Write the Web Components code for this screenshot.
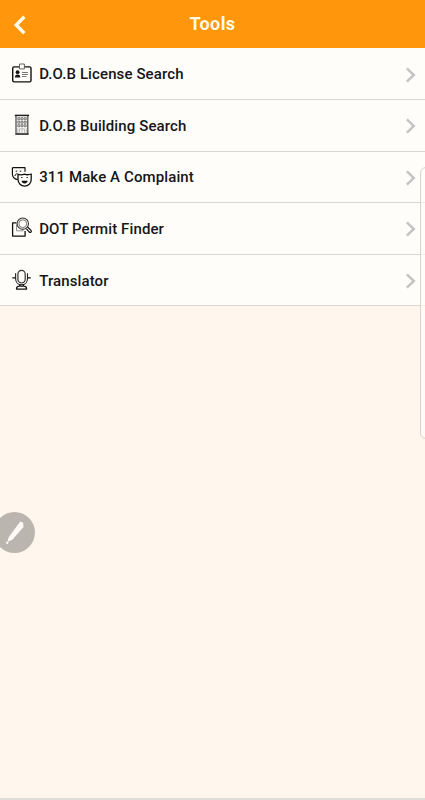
<!DOCTYPE html>
<html lang="en">
<head>
<meta charset="utf-8">
<title>Tools</title>
<style>
html,body{margin:0;height:100%;overflow:hidden}
body{font-family:Roboto,"Liberation Sans",sans-serif;background:#fff6ed}
</style>
</head>
<body>
<tools-screen></tools-screen>
<script>
const define = (name, markup) => customElements.define(name, class extends HTMLElement {
  constructor() {
    super();
    this.attachShadow({ mode: 'open' }).innerHTML = typeof markup === 'function' ? markup(this) : markup;
  }
});

const icons = {
  license: `<rect x="2.7" y="4.9" width="18.3" height="15" rx="1.4" stroke-width="1.4"/>
    <path d="M9.5 6.9V2h4.900v4.900z" fill="#fffdfa" stroke="#555" stroke-width=".9"/>
    <circle cx="7.6" cy="10.2" r="1.9" fill="#111" stroke="none"/><path d="M4.9 15.6c0-2.2 1-3.2 2.7-3.2s2.7 1 2.7 3.2z" fill="#111" stroke="none"/>
    <path d="M12 10.500h6M12 12.500h6M12 14.500h4.4" stroke="#777" stroke-width="1"/>`,
  building: `<path d="M6 3v17.3M17.8 3v17.3" stroke="#555" stroke-width="1.3"/>
    <path d="M4.8 2.4h14.3" stroke="#222" stroke-width="1.5"/><path d="M5.3 21h13.4" stroke-width="1.5"/>
    <path d="M7.8 4.7h2v2h-2zm3.2 0h2v2h-2zm3.2 0h2v2h-2zM7.8 8.2h2v2h-2zm3.2 0h2v2h-2zm3.2 0h2v2h-2zM7.8 11.7h2v2h-2zm3.2 0h2v2h-2zm3.2 0h2v2h-2z" stroke="#444" stroke-width=".7"/>
    <path d="M9.6 20.5v-4.7h4.8v4.7M12 16v4.5M7.8 15.3v4.8M16.2 15.3v4.8" stroke="#999" stroke-width=".7"/>`,
  masks: `<path d="M2.4 2.7H15v4M2.4 2.7v6.1c0 3 2.2 5.3 5.2 5.8" stroke-width="1.2"/>
    <path d="M5.7 6.2h1.5M9.7 6.2h1.5M5 11c.2-1.6 1-2.3 2.6-2.3" stroke-width="1"/>
    <path d="M8 9.4q3.4 1 6.6-.2 3.1 1.2 6.6-.2v5.4c0 4-3 6.7-6.6 6.7S8 18.300 8 14.500z" stroke-width="1.3"/>
    <path d="M11.2 12.500h1.300M16.500 12.500h1.300" stroke-width="1.2"/><path d="M11.500 15.700h6.200c-.4 1.800-1.500 2.700-3.100 2.700s-2.700-.9-3.100-2.700z" fill="#111" stroke="none"/>`,
  permit: `<path d="M6.500 6.800H2.600v13.300h12.500v-5" stroke-width="1.3"/><path d="M6.500 8.500v6.300h7" stroke="#777" stroke-width=".8"/>
    <path d="M16.300 12.700l3 3.400c1.300 1 2.700-.4 1.700-1.700L17.600 11" stroke-width="1.200"/>
    <circle cx="12.800" cy="7.700" r="5.700" fill="#fffdfa" stroke="#333" stroke-width="1.100"/><circle cx="12.800" cy="7.700" r="3.900" stroke="#555" stroke-width=".8"/>`,
  mic: `<rect x="7.900" y="2.300" width="7.300" height="12.700" rx="3.650" stroke="#333" stroke-width="1.200"/>
    <path d="M5.600 5.200v5.200c0 3.900 2.600 6.400 5.950 6.400s5.950-2.500 5.950-6.400V5.200" stroke="#222" stroke-width="1.100"/>
    <path d="M2.300 9.900h3.300M17.500 9.900h3.300" stroke-width="1.400"/><path d="M9.800 16.600v1.300M13.300 16.600v1.300M6.500 21.100c0-1.900 1-2.900 2.700-2.900h4.700c1.700 0 2.700 1 2.700 2.900z" stroke-width="1.300"/>`
};

define('tool-icon', el => `<style>:host{display:block;width:24px;height:24px}svg{display:block}</style>
<svg width="24" height="24" viewBox="0 0 24 24" fill="none" stroke="#111" stroke-linejoin="round">${icons[el.getAttribute('name')]}</svg>`);

define('app-header', `<style>
:host{display:grid;grid-template-columns:40px 1fr 40px;height:48.400px;background:#ff960c;color:#fffbe3;align-items:center}
svg{display:block;margin:2px 0 0 13px}
h1{margin:0;text-align:center;font-size:18px;line-height:22px;font-weight:700;letter-spacing:.38px}
</style><svg width="14" height="20" viewBox="0 0 14 20" fill="none" stroke="#fffbe8" stroke-width="3.400"><path d="M11.400 1.700 3.200 10l8.200 8.300"/></svg><h1><slot></slot></h1>`);

define('tool-row', el => `<style>
:host{display:flex;align-items:center;box-sizing:border-box;height:51.600px;padding:0 9px 0 10px;background:#fffdfa;border-bottom:1px solid #d9d7d5;color:#161616}
span{flex:1;margin:1.200px 0 0 5.200px;font-size:15px;line-height:20px;font-weight:500;letter-spacing:.11px;white-space:nowrap}
.chevron{margin-top:2px}
</style><tool-icon name="${el.getAttribute('icon')}"></tool-icon><span><slot></slot></span>
<svg class="chevron" width="11" height="16" viewBox="0 0 11 16" fill="none" stroke="#c5c4c4" stroke-width="2.500"><path d="m1.900 1.300 6.900 6.700-6.900 6.700"/></svg>`);

define('edge-panel', `<style>
:host{position:absolute;left:420px;top:167px;width:12px;height:272px;box-sizing:border-box;border:1px solid #d8d3cd;border-radius:7px;background:rgba(255,253,250,.6)}
</style>`);

define('pen-button', `<style>
:host{position:absolute;left:-6px;top:512px;width:41px;height:41px;border-radius:50%;background:#bbb5af}
svg{display:block}
</style><svg width="41" height="41" viewBox="0 0 41 41" fill="#fffaf5"><path d="M25.700 10.300c1.200-1.100 3.600 0 3.600 1.700v3.300L18.600 27.400l-3.800 2.200-1.200-1.100 1.300-3.500z"/><circle cx="13.200" cy="30.800" r="1.200"/></svg>`);

define('tools-screen', `<style>
:host{display:flex;flex-direction:column;position:relative;width:100%;height:100vh;overflow:hidden;box-sizing:border-box;background:#fff6ed;border-bottom:2px solid #dfddd9}
</style>
<app-header>Tools</app-header>
<main>
<tool-row icon="license">D.O.B License Search</tool-row>
<tool-row icon="building">D.O.B Building Search</tool-row>
<tool-row icon="masks">311 Make A Complaint</tool-row>
<tool-row icon="permit">DOT Permit Finder</tool-row>
<tool-row icon="mic">Translator</tool-row>
</main>
<edge-panel></edge-panel><pen-button></pen-button>`);
</script>
</body>
</html>
